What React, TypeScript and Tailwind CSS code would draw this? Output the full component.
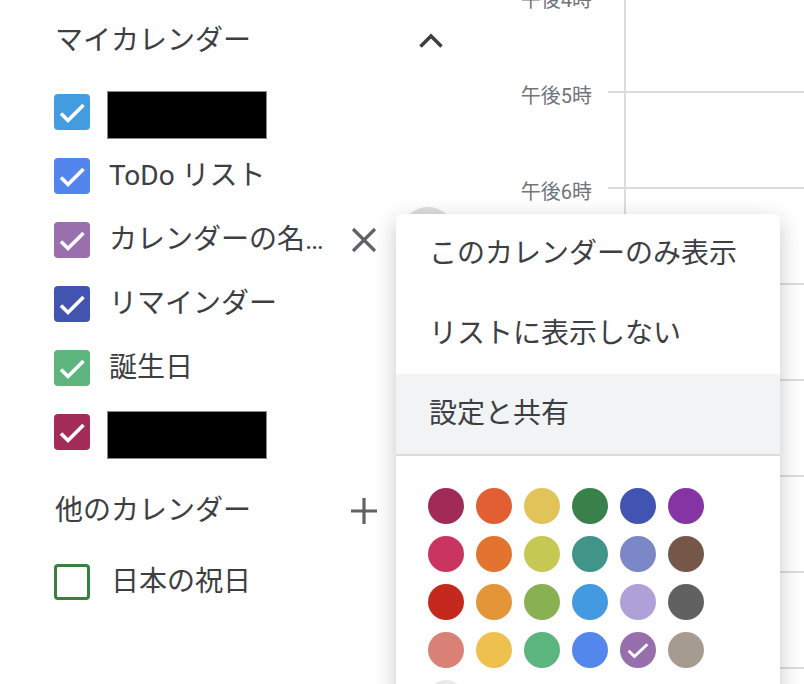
import React from 'react';

type Cal = { color: string; label?: string; hidden?: boolean };

const myCalendars: Cal[] = [
  { color: 'bg-[#449ce0]', hidden: true },
  { color: 'bg-[#5286ec]', label: 'ToDo リスト' },
  { color: 'bg-[#9a6fae]', label: 'カレンダーの名前テスト' },
  { color: 'bg-[#4254b0]', label: 'リマインダー' },
  { color: 'bg-[#5db47d]', label: '誕生日' },
  { color: 'bg-[#a22b57]', hidden: true },
];

const hours = ['午後4時', '午後5時', '午後6時', '午後7時', '午後8時', '午後9時', '午後10時', '午後11時'];

const swatches = [
  ['bg-[#a12b57]', 'bg-[#e25f33]', 'bg-[#e2c35a]', 'bg-[#39804a]', 'bg-[#4254b1]', 'bg-[#8434a3]'],
  ['bg-[#c93460]', 'bg-[#e27430]', 'bg-[#c5c954]', 'bg-[#409488]', 'bg-[#7b87c6]', 'bg-[#745749]'],
  ['bg-[#c5291e]', 'bg-[#e49538]', 'bg-[#89b052]', 'bg-[#449ae0]', 'bg-[#afa0d8]', 'bg-[#616161]'],
  ['bg-[#d98077]', 'bg-[#eec04d]', 'bg-[#5cb47e]', 'bg-[#5387ec]', 'bg-[#976fac]', 'bg-[#a69b91]'],
];

const Tick = ({ size = 36 }: { size?: number }) => (
  <svg width={size} height={size} viewBox="0 0 36 36">
    <polyline points="7,19.5 14,26.5 29.5,11" fill="none" stroke="white" strokeWidth="3.6" />
  </svg>
);

const CheckBox = ({ color }: { color: string }) => (
  <div className={`w-[36px] h-[36px] rounded-[4px] shrink-0 ${color}`}>
    <Tick />
  </div>
);

const App: React.FC = () => {
  return (
    <div className="relative flex h-screen w-full overflow-hidden bg-white font-['Roboto','Noto_Sans_CJK_JP',sans-serif] text-[#3c4043]">
      {/* sidebar */}
      <div className="w-[470px] shrink-0 pl-[54px]">
        <div className="flex h-[82px] w-[401px] items-center justify-between">
          <span className="text-[28px] pl-[1px]">マイカレンダー</span>
          <div className="flex w-[48px] h-[48px] items-center justify-center">
            <svg width="26" height="16" viewBox="0 0 26 16">
              <polyline points="2.5,13.5 13,3 23.5,13.5" fill="none" stroke="#3c4043" strokeWidth="3.6" />
            </svg>
          </div>
        </div>

        {myCalendars.map((c, i) => (
          <div key={i} className={`flex h-[64px] items-center ${i === 0 ? '-mt-[2px]' : ''}`}>
            <CheckBox color={c.color} />
            {c.hidden ? (
              <div className="ml-[17px] mt-[6px] w-[160px] h-[48px] bg-black border border-[#8a8a8a]" />
            ) : i === 2 ? (
              <>
                <span className="ml-[19px] w-[220px] truncate text-[28px]">{c.label}</span>
                <div className="ml-[10px] flex w-[50px] h-[50px] items-center justify-center">
                  <svg width="26" height="26" viewBox="0 0 26 26">
                    <path d="M2 2 L24 24 M24 2 L2 24" stroke="#5f6368" strokeWidth="3.2" />
                  </svg>
                </div>
                <div className="ml-[11px] -mt-[10px] w-[56px] h-[56px] rounded-full bg-[#dedede]" />
              </>
            ) : (
              <span className="ml-[19px] text-[28px]">{c.label}</span>
            )}
          </div>
        ))}

        <div className="flex h-[94px] w-[335px] items-center justify-between">
          <span className="text-[28px] pl-[1px]">他のカレンダー</span>
          <div className="flex w-[50px] h-[50px] items-center justify-center">
            <svg width="28" height="28" viewBox="0 0 28 28">
              <path d="M14 1 V27 M1 14 H27" stroke="#5f6368" strokeWidth="3.2" />
            </svg>
          </div>
        </div>
        <div className="flex h-[48px] items-center">
          <div className="w-[36px] h-[36px] rounded-[4px] border-[3.5px] border-[#38803f]" />
          <span className="ml-[21px] text-[28px]">日本の祝日</span>
        </div>
      </div>

      {/* time grid */}
      <div className="flex-1 -mt-[5px]">
        {hours.map((h) => (
          <div key={h} className="flex h-[96px]">
            <div className="w-[138px] shrink-0 pr-[16px] text-right">
              <span className="block -mt-[5px] text-[20px] leading-[20px] text-[#70757a]">{h}</span>
            </div>
            <div className="flex-1 border-t-2 border-[#dadce0]">
              <div className="ml-[16px] h-full border-l-2 border-[#dadce0]" />
            </div>
          </div>
        ))}
      </div>

      {/* menu */}
      <div className="absolute left-[396px] top-[214px] w-[384px] h-[520px] rounded-[6px] bg-white shadow-[0_6px_22px_rgba(0,0,0,0.22)]">
        <div className="flex h-[80px] items-center px-[33px] text-[28px]">このカレンダーのみ表示</div>
        <div className="flex h-[80px] items-center px-[33px] text-[28px]">リストに表示しない</div>
        <div className="flex h-[80px] items-center px-[33px] text-[28px] bg-[#f1f3f4]">設定と共有</div>
        <div className="h-[2px] bg-[#dadce0]" />
        <div className="flex flex-col gap-[12px] pl-[32px] pt-[32px]">
          {swatches.map((row, r) => (
            <div key={r} className="flex gap-[12px]">
              {row.map((s, k) => (
                <div key={k} className={`flex w-[36px] h-[36px] items-center justify-center rounded-full ${s}`}>
                  {r === 3 && k === 4 && (
                    <svg width="26" height="26" viewBox="0 0 36 36">
                      <polyline points="5,19 13,27 31,10" fill="none" stroke="white" strokeWidth="4" />
                    </svg>
                  )}
                </div>
              ))}
            </div>
          ))}
          <div className="w-[36px] h-[36px] rounded-full bg-[#e8eaed]" />
        </div>
      </div>
    </div>
  );
};

export default App;
